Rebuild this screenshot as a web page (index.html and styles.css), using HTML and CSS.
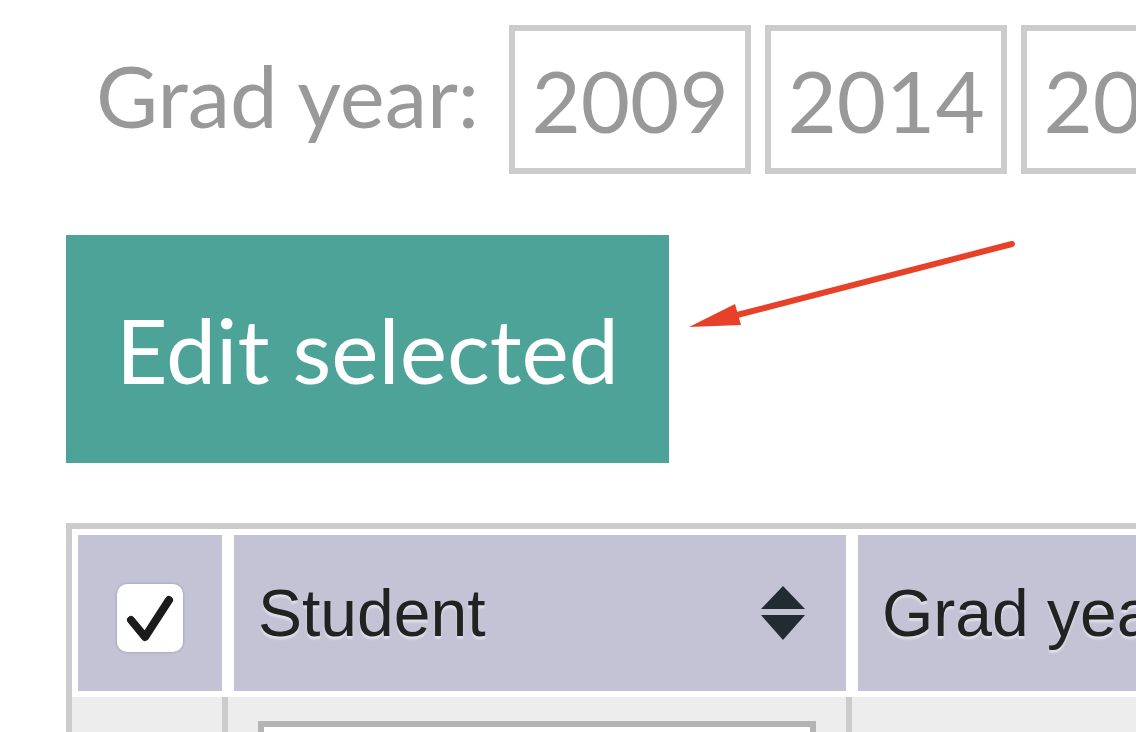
FILE: index.html
```html
<!DOCTYPE html>
<html lang="en">
<head>
    <meta charset="UTF-8">
    <meta name="viewport" content="width=device-width, initial-scale=1.0">
    <title>Students</title>
    <link rel="stylesheet" href="styles.css">
</head>
<body>
    <div class="filter-row">
        <span class="filter-label">Grad year:</span>
        <span class="year-box">2009</span>
        <span class="year-box">2014</span>
        <span class="year-box">2015</span>
    </div>

    <button type="button" class="btn-edit">Edit selected</button>

    <!-- annotation arrow -->
    <svg class="arrow" width="340" height="110" viewBox="0 0 340 110">
        <line x1="57" y1="85" x2="332" y2="14" stroke="#e8412a" stroke-width="6" stroke-linecap="round"/>
        <polygon points="9,97 55,74 61,95" fill="#e8412a"/>
    </svg>

    <table class="students">
        <colgroup>
            <col class="col-check">
            <col class="col-student">
            <col class="col-year">
        </colgroup>
        <thead>
            <tr>
                <th class="th-check">
                    <span class="checkbox">
                        <svg width="66" height="68" viewBox="0 0 66 68">
                            <polyline points="14,36 28,53 52,16" fill="none" stroke="#1b1b1b" stroke-width="8" stroke-linecap="round" stroke-linejoin="round"/>
                        </svg>
                    </span>
                </th>
                <th>
                    <div class="th-inner">
                        <span>Student</span>
                        <svg class="sort" width="44" height="54" viewBox="0 0 44 54">
                            <polygon points="22,0 44,23 0,23" fill="#232b32"/>
                            <polygon points="0,29 44,29 22,54" fill="#232b32"/>
                        </svg>
                    </div>
                </th>
                <th>
                    <div class="th-inner">
                        <span>Grad year</span>
                    </div>
                </th>
            </tr>
        </thead>
        <tbody>
            <tr>
                <td></td>
                <td><input type="text" class="name-input"></td>
                <td></td>
            </tr>
        </tbody>
    </table>
</body>
</html>
```

FILE: styles.css
```css
html, body {
    overflow: hidden;
}
body {
    margin: 0;
    background-color: #fff;
    font-family: Lato, "Open Sans", sans-serif;
    position: relative;
    width: 1136px;
    height: 732px;
}
.filter-row {
    display: flex;
    align-items: center;
    gap: 14px;
    padding: 25px 0 0 96px;
    white-space: nowrap;
}
.filter-label {
    font-size: 85px;
    color: #999;
    margin-right: 16px;
    margin-bottom: 10px;
    flex-shrink: 0;
}
.year-box {
    flex-shrink: 0;
    box-sizing: border-box;
    width: 242px;
    height: 149px;
    border: 6px solid #ccc;
    display: flex;
    align-items: center;
    justify-content: center;
    font-size: 85px;
    color: #999;
}
.btn-edit {
    display: flex;
    align-items: center;
    justify-content: center;
    margin: 61px 0 0 66px;
    width: 603px;
    height: 228px;
    padding: 0;
    border: none;
    border-radius: 0;
    background-color: #4da398;
    color: #fff;
    font-family: Lato, "Open Sans", sans-serif;
    font-size: 89.5px;
}
.arrow {
    position: absolute;
    left: 680px;
    top: 230px;
}
.students {
    margin: 60px 0 0 66px;
    width: 1392px;
    table-layout: fixed;
    border-collapse: separate;
    border-spacing: 0;
    border: 6px solid #ccc;
    font-family: "Liberation Sans", Arial, sans-serif;
}
.col-check {
    width: 156px;
}
.col-student {
    width: 624px;
}
.col-year {
    width: 600px;
}
.students th {
    box-sizing: border-box;
    height: 168px;
    padding: 0;
    border: 6px solid #fff;
    background-color: #c4c3d6;
    text-align: left;
    font-weight: normal;
    font-size: 66px;
    color: #222;
    text-shadow: 0 3px 2px rgba(255, 255, 255, 0.45);
    vertical-align: middle;
    white-space: nowrap;
    overflow: hidden;
}
.students .th-check {
    text-align: center;
}
.checkbox {
    display: inline-block;
    width: 66px;
    height: 68px;
    vertical-align: middle;
    background: #fff;
    border-radius: 10px;
    box-shadow: 0 0 3px rgba(0, 0, 0, 0.25);
}
.checkbox svg {
    display: block;
}
.th-inner {
    display: flex;
    align-items: center;
    justify-content: space-between;
    padding: 0 41px 0 24px;
}
.sort {
    display: block;
    flex-shrink: 0;
}
.students td {
    box-sizing: border-box;
    height: 130px;
    padding: 24px 30px;
    background-color: #ededed;
    border-right: 6px solid #ccc;
    vertical-align: top;
}
.name-input {
    box-sizing: border-box;
    display: block;
    width: 100%;
    height: 70px;
    border: 6px solid #b4b4b4;
    background: #fff;
    margin: 0;
}
```
